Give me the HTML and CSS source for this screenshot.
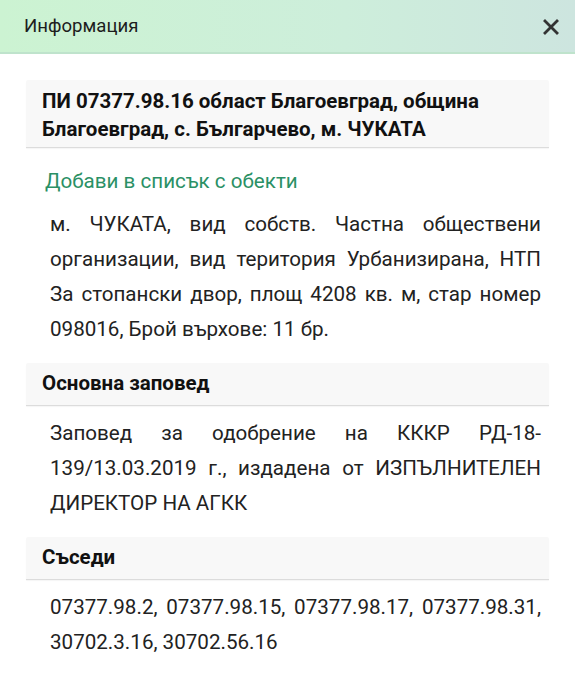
FILE: index.html
```html
<!DOCTYPE html>
<html lang="bg">
<head>
<meta charset="utf-8">
<title>Информация</title>
<link rel="stylesheet" href="styles.css">
</head>
<body>
<div class="dialog">
  <header class="topbar">
    <span class="title">Информация</span>
    <span class="close" aria-label="close">
      <svg width="16" height="16" viewBox="0 0 16 16"><path d="M2 2 L14 14 M14 2 L2 14" stroke="#333" stroke-width="2.8" stroke-linecap="square"/></svg>
    </span>
  </header>
  <main class="content">
    <div class="sec-head two-line">ПИ 07377.98.16 област Благоевград, община Благоевград, с. Българчево, м. ЧУКАТА</div>
    <div class="link">Добави в списък с обекти</div>
    <p class="para">м. ЧУКАТА, вид собств. Частна обществени организации, вид територия Урбанизирана, НТП За стопански двор, площ 4208 кв. м, стар номер 098016, Брой върхове: 11 бр.</p>
    <div class="sec-head">Основна заповед</div>
    <p class="para">Заповед за одобрение на КККР РД-18-139/13.03.2019 г., издадена от ИЗПЪЛНИТЕЛЕН ДИРЕКТОР НА АГКК</p>
    <div class="sec-head">Съседи</div>
    <p class="para">07377.98.2, 07377.98.15, 07377.98.17, 07377.98.31, 30702.3.16, 30702.56.16</p>
  </main>
</div>
</body>
</html>
```

FILE: styles.css
```css
html, body {
  margin: 0;
  padding: 0;
  background: #ffffff;
}
body {
  font-family: Roboto, "Noto Sans", sans-serif;
  color: #212121;
}
.topbar {
  height: 52px;
  display: flex;
  align-items: center;
  justify-content: space-between;
  padding: 0 16px 0 24px;
  background: linear-gradient(90deg, #ccf3d2 0%, #cdeedb 60%, #cde5df 100%);
  border-bottom: 2px solid #bfe3cc;
}
.title {
  font-size: 18.6px;
  color: #1d1d1d;
}
.close {
  display: flex;
  width: 16px;
  height: 16px;
  margin-top: 2px;
}
.content {
  padding: 26px 26px 20px 26px;
}
.sec-head {
  background: #f8f8f8;
  border-bottom: 1px solid #dcdcdc;
  box-shadow: 0 1px 1px rgba(0,0,0,0.04);
  border-radius: 2px 2px 0 0;
  padding: 8px 16px 10px 16px;
  font-size: 20.5px;
  font-weight: 700;
  line-height: 24px;
  color: #111;
}
.sec-head.two-line {
  padding: 7px 16px 4px 16px;
  line-height: 28px;
}
.link {
  color: #2a9065;
  font-size: 20.6px;
  line-height: 28px;
  padding: 19px 0 2px 19px;
}
.para {
  margin: 10px 8px 16px 24px;
  font-size: 20.6px;
  line-height: 35px;
  text-align: justify;
  color: #222;
}
```
